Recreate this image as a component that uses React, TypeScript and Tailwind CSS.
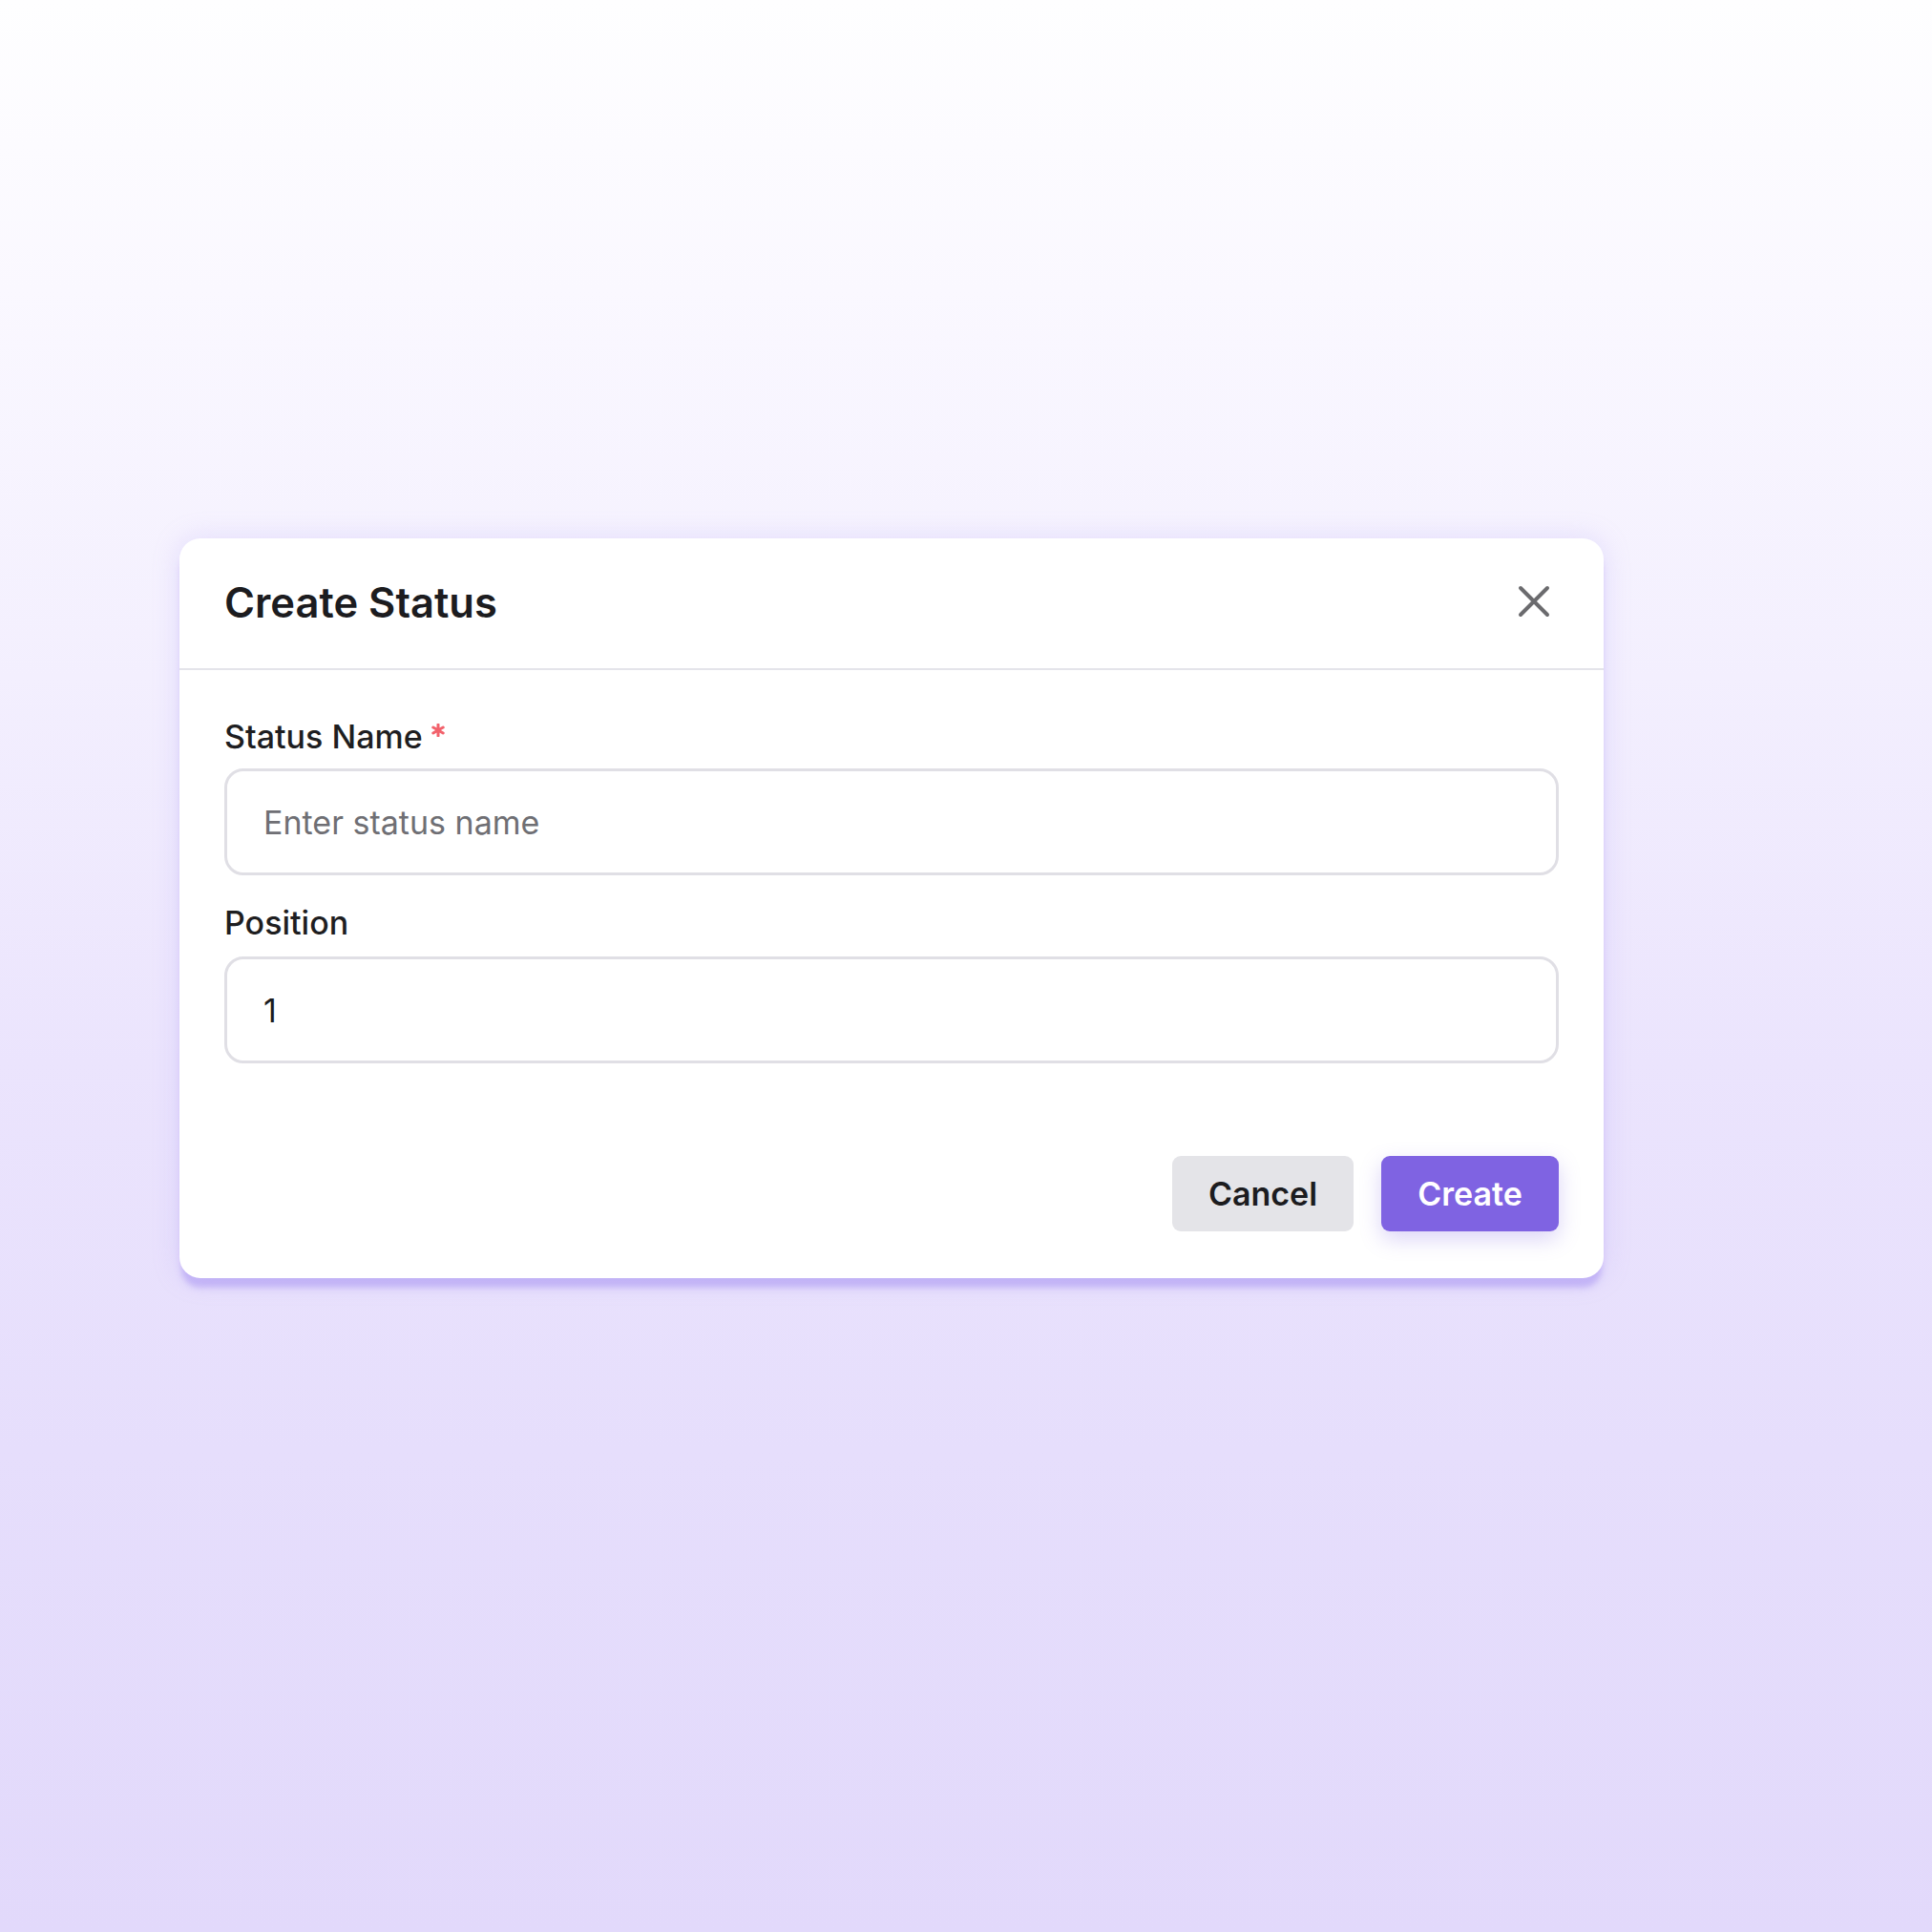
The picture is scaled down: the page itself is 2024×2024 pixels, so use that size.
import React from "react";

export default function App() {
  return (
    <div
      className="w-full h-[2024px] pt-[564px] pl-[188px] bg-[linear-gradient(180deg,#fefeff_0%,#faf8ff_15%,#f3effe_35%,#ebe4fd_55%,#e6defc_75%,#e2d9fb_100%)]"
      style={{ fontFamily: "Inter, 'Noto Sans', sans-serif" }}
    >
      <div className="w-[1492px] h-[775px] bg-white rounded-[22px] shadow-[0_12px_6px_-2px_rgba(170,150,242,0.55),0_0_28px_rgba(170,150,242,0.25)] flex flex-col">
        {/* Header */}
        <div className="h-[138px] shrink-0 px-[47px] flex items-center justify-between border-b-2 border-[#e4e4ea]">
          <h2 className="text-[43.5px] leading-none font-semibold text-[#1c1c1f]">
            Create Status
          </h2>
          <button className="w-[40px] h-[40px] flex items-center justify-center mr-[6px] mb-[4px]">
            <svg width="34" height="34" viewBox="0 0 34 34" fill="none">
              <path
                d="M3 3 L31 31 M31 3 L3 31"
                stroke="#6b6b6e"
                strokeWidth="4"
                strokeLinecap="round"
              />
            </svg>
          </button>
        </div>

        {/* Body */}
        <div className="flex-1 flex flex-col px-[47px] pt-[49px] pb-[49px]">
          <label className="flex items-start text-[34px] leading-[41px] font-medium text-[#1e1e21]">
            Status Name
            <svg
              width="14"
              height="14"
              viewBox="0 0 14 14"
              className="ml-[9px] mt-[7px]"
            >
              <path
                d="M7 1 L7 13 M1.8 4 L12.2 10 M12.2 4 L1.8 10"
                stroke="#f2626c"
                strokeWidth="3"
                strokeLinecap="round"
              />
            </svg>
          </label>
          <div className="mt-[13px] h-[112px] rounded-[20px] border-[3px] border-[#e0dfe5] flex items-center pl-[38px]">
            <span className="text-[34px] text-[#6f6f74]">Enter status name</span>
          </div>

          <label className="mt-[29px] text-[34px] leading-[41px] font-medium text-[#1e1e21]">
            Position
          </label>
          <div className="mt-[15px] h-[112px] rounded-[20px] border-[3px] border-[#e0dfe5] flex items-center pl-[38px]">
            <span className="text-[34px] text-[#1c1c1f]">1</span>
          </div>

          <div className="mt-auto flex justify-end gap-[29px]">
            <button className="w-[190px] h-[79px] rounded-[9px] bg-[#e4e4e8] text-[34px] font-semibold text-[#1c1c1f] flex items-center justify-center">
              Cancel
            </button>
            <button className="w-[186px] h-[79px] rounded-[9px] bg-[#7f63e2] text-[34px] font-semibold text-white flex items-center justify-center shadow-[0_8px_22px_rgba(127,99,226,0.28)]">
              Create
            </button>
          </div>
        </div>
      </div>
    </div>
  );
}
